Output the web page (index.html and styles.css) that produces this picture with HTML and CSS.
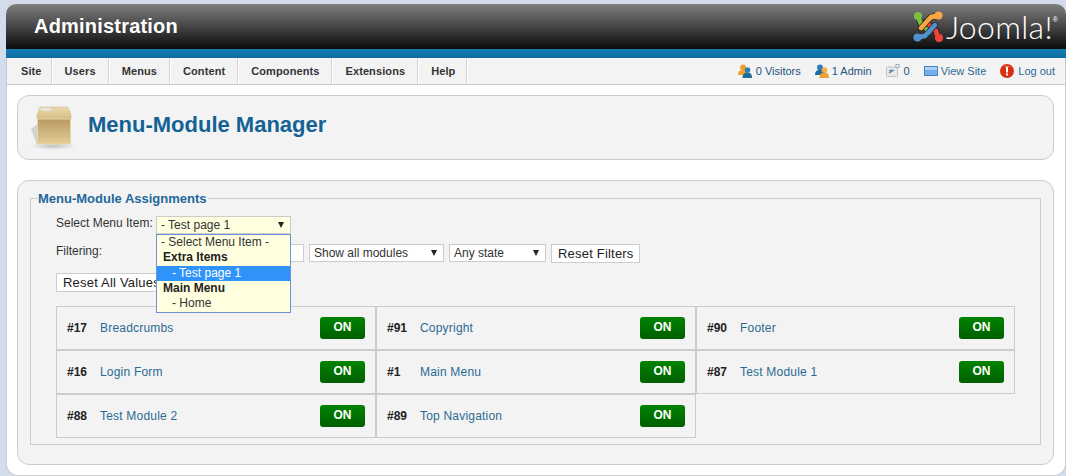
FILE: index.html
```html
<!DOCTYPE html>
<html lang="en">
<head>
<meta charset="utf-8">
<title>Menu-Module Manager</title>
<link rel="stylesheet" href="styles.css">
</head>
<body>
<div class="desk">
<div class="wrap">
  <header class="head">
    <div class="brand">Administration</div>
    <div class="logo">
      <svg class="logo-mark" width="32" height="32" viewBox="0 0 32 32" aria-hidden="true">
        <g fill="none" stroke-linecap="round" stroke-linejoin="round">
          <g stroke="#1a1a1a" stroke-width="6"><path d="M5 5 L8 13 L17 21"/></g>
          <g stroke="#7ac143" stroke-width="4.800"><path d="M5 5 L8 13 L17 21"/></g>
          <g stroke="#1a1a1a" stroke-width="6"><path d="M25 27 L23 20 L13 11"/></g>
          <g stroke="#ef4135" stroke-width="4.800"><path d="M25 27 L23 20 L13 11"/></g>
          <g stroke="#1a1a1a" stroke-width="6"><path d="M25 5 L18 6 L8 17"/></g>
          <g stroke="#f9a541" stroke-width="4.800"><path d="M25 5 L18 6 L8 17"/></g>
          <g stroke="#1a1a1a" stroke-width="6"><path d="M4 26 L12 25 L22 14"/></g>
          <g stroke="#5091cd" stroke-width="4.800"><path d="M4 26 L12 25 L22 14"/></g>
        </g>
        <circle cx="5" cy="5" r="4" fill="#7ac143"/>
        <circle cx="25.500" cy="4.500" r="4" fill="#f9a541"/>
        <circle cx="26" cy="27" r="4" fill="#ef4135"/>
        <circle cx="4.500" cy="26.500" r="4" fill="#5091cd"/>
      </svg>
      <span class="logo-text">Joomla!</span><span class="logo-reg">®</span>
    </div>
  </header>
  <div class="band"></div>
  <nav class="bar">
    <ul class="menu">
      <li class="menu-item">Site</li>
      <li class="menu-item">Users</li>
      <li class="menu-item">Menus</li>
      <li class="menu-item">Content</li>
      <li class="menu-item">Components</li>
      <li class="menu-item">Extensions</li>
      <li class="menu-item">Help</li>
    </ul>
    <div class="status">
      <span class="stat">
        <svg class="ico" viewBox="0 0 14 14" aria-hidden="true"><circle cx="5" cy="3.500" r="3" fill="#f0a030"/><path d="M0 11c0-4 2-5 5-5s5 1 5 5z" fill="#f0a030"/><circle cx="9.500" cy="6" r="2.800" fill="#2f7fb5"/><path d="M4.500 14c0-4 2-5.500 5-5.500s4.500 1.500 4.500 5.500z" fill="#1f6c9f"/></svg>
        0 Visitors
      </span>
      <span class="stat stat-tight">
        <svg class="ico" viewBox="0 0 14 14" aria-hidden="true"><circle cx="5" cy="3.500" r="3" fill="#2f7fb5"/><path d="M0 11c0-4 2-5 5-5s5 1 5 5z" fill="#1f6c9f"/><circle cx="9.500" cy="6" r="2.800" fill="#f5ad3c"/><path d="M4.500 14c0-4 2-5.500 5-5.500s4.500 1.500 4.500 5.500z" fill="#f0a030"/></svg>
        1 Admin
      </span>
      <span class="stat">
        <svg class="ico" viewBox="0 0 14 14" aria-hidden="true"><rect x="0.500" y="3" width="11" height="9.500" rx="1" fill="#e8e8e8" stroke="#c4c4c4"/><path d="M3 9l5-3M3 7l3-1" stroke="#4f7fa5" stroke-width="1.200"/><rect x="10" y="0.500" width="3" height="3" fill="#fff" stroke="#9ab"/></svg>
        <span>0</span>
      </span>
      <a class="stat stat-link stat-tight" href="#">
        <svg class="ico" viewBox="0 0 14 14" aria-hidden="true"><rect x="0.500" y="2.500" width="13" height="9" fill="#6fb0ea" stroke="#4a7fb8"/><rect x="1" y="3" width="12" height="3" fill="#a8d2f5"/></svg>
        View Site
      </a>
      <a class="stat stat-link" href="#">
        <svg class="ico" viewBox="0 0 14 14" aria-hidden="true"><circle cx="7" cy="7" r="7" fill="#d8300f"/><path d="M3 3a6 6 0 0 1 8 0z" fill="#ee7a50"/><rect x="6" y="3" width="2" height="5.500" fill="#fff"/><rect x="6" y="9.500" width="2" height="2" fill="#fff"/></svg>
        Log out
      </a>
    </div>
  </nav>
  <main class="content">
    <section class="panel title-panel">
      <svg class="box-icon" width="48" height="50" viewBox="0 0 48 50" aria-hidden="true">
        <defs>
          <linearGradient id="boxFront" x1="0" y1="0" x2="0" y2="1"><stop offset="0" stop-color="#b89a62"/><stop offset="1" stop-color="#e3cc95"/></linearGradient>
          <linearGradient id="boxTop" x1="0" y1="0" x2="0" y2="1"><stop offset="0" stop-color="#eadab0"/><stop offset="1" stop-color="#d6bc82"/></linearGradient>
          <radialGradient id="boxShadow"><stop offset="0" stop-color="#999" stop-opacity=".55"/><stop offset="1" stop-color="#999" stop-opacity="0"/></radialGradient>
        </defs>
        <ellipse cx="23" cy="41" rx="23" ry="4" fill="url(#boxShadow)"/>
        <path d="M7 19 L1 24 L7 40z" fill="#d2d2d2"/>
        <path d="M10 2 L38 2 L41 10 L41 14 L7 14 L7 10z" fill="url(#boxTop)" stroke="#cdb57f" stroke-width=".5"/>
        <rect x="7.500" y="14" width="33" height="25" fill="url(#boxFront)" stroke="#e6d6ac"/>
        <rect x="11" y="3.500" width="10" height="2" fill="#e4eef5"/>
      </svg>
      <h1 class="page-title">Menu-Module Manager</h1>
    </section>
    <section class="panel main-panel">
      <fieldset class="group">
        <legend class="group-title">Menu-Module Assignments</legend>
        <div class="row row-select">
          <span class="row-label">Select Menu Item:</span>
          <div class="picker">
            <div class="select select-open"><span>- Test page 1</span><i class="arrow"></i></div>
            <ul class="dropdown">
              <li class="opt opt-top">- Select Menu Item -</li>
              <li class="opt opt-top opt-group">Extra Items</li>
              <li class="opt opt-sub opt-active">- Test page 1</li>
              <li class="opt opt-group">Main Menu</li>
              <li class="opt opt-sub">- Home</li>
            </ul>
          </div>
        </div>
        <div class="row row-filter">
          <span class="row-label">Filtering:</span>
          <div class="filters">
            <div class="search"></div>
            <div class="select select-modules"><span>Show all modules</span><i class="arrow"></i></div>
            <div class="select select-state"><span>Any state</span><i class="arrow"></i></div>
            <button class="btn btn-filters" type="button">Reset Filters</button>
          </div>
        </div>
        <div class="row row-reset">
          <button class="btn btn-reset" type="button">Reset All Values</button>
        </div>
        <div class="grid">
          <div class="cell"><b class="cell-id">#17</b><a class="cell-name" href="#">Breadcrumbs</a><span class="on">ON</span></div>
          <div class="cell"><b class="cell-id">#91</b><a class="cell-name" href="#">Copyright</a><span class="on">ON</span></div>
          <div class="cell"><b class="cell-id">#90</b><a class="cell-name" href="#">Footer</a><span class="on">ON</span></div>
          <div class="cell"><b class="cell-id">#16</b><a class="cell-name" href="#">Login Form</a><span class="on">ON</span></div>
          <div class="cell"><b class="cell-id">#1</b><a class="cell-name" href="#">Main Menu</a><span class="on">ON</span></div>
          <div class="cell"><b class="cell-id">#87</b><a class="cell-name" href="#">Test Module 1</a><span class="on">ON</span></div>
          <div class="cell"><b class="cell-id">#88</b><a class="cell-name" href="#">Test Module 2</a><span class="on">ON</span></div>
          <div class="cell"><b class="cell-id">#89</b><a class="cell-name" href="#">Top Navigation</a><span class="on">ON</span></div>
        </div>
      </fieldset>
    </section>
  </main>
</div>
</div>
</body>
</html>
```
FILE: styles.css
```css
* { box-sizing: border-box; }
html { background: #fff; height: 476px; overflow: hidden; }
body {
  margin: 0;
  width: 1072px;
  height: 476px;
  background: #fff;
  font-family: "Liberation Sans", Arial, sans-serif;
  font-size: 12px;
  color: #333;
}
a { text-decoration: none; }
ul { list-style: none; margin: 0; padding: 0; }

.desk {
  width: 1066px;
  height: 476px;
  padding: 4px 0 0 6px;
  background: #d3dcea;
}

.wrap {
  width: 1060px;
  height: 472px;
  background: #fff;
  border: 1px solid #ccc;
  border-top: 0;
  border-radius: 10px 10px 12px 12px;
}

.head {
  height: 45px;
  margin: 0 -1px;
  display: flex;
  justify-content: space-between;
  background: linear-gradient(#7f7f7f, #0b0b0b);
  border-radius: 10px 10px 0 0;
}
.brand {
  margin: 10px 0 0 28px;
  font-size: 20px;
  line-height: 24px;
  font-weight: 700;
  letter-spacing: .2px;
  color: #fff;
}
.logo {
  display: flex;
  align-items: flex-start;
  margin-right: 8px;
  color: #fff;
}
.logo-mark { margin: 7px 1px 0 0; }
.logo-text {
  font-family: Lato, "Liberation Sans", sans-serif;
  font-weight: 300;
  font-size: 32px;
  line-height: 36px;
  margin-top: 5px;
  letter-spacing: .3px;
}
.logo-reg { font-size: 7px; line-height: 8px; margin-top: 12px; }

.band {
  height: 9px;
  margin: 0 -1px;
  background: linear-gradient(#1280b8, #0e6c9e);
}

.bar {
  height: 27px;
  display: flex;
  justify-content: space-between;
  background: #f3f3f3;
  border-bottom: 1px solid #ccc;
}
.menu { display: flex; }
.menu-item {
  padding: 0 12px 0 13px;
  line-height: 26px;
  font-size: 11px;
  font-weight: 700;
  letter-spacing: .1px;
  color: #333;
  border-right: 1px solid #d4d4d4;
  box-shadow: 1px 0 0 #fff;
}
.menu-item:first-child { padding-left: 14px; padding-right: 9px; }
.menu-item:last-child { padding-right: 11px; }

.status {
  display: flex;
  align-items: center;
  gap: 14px;
  padding-right: 10px;
  font-size: 11px;
  color: #24557c;
}
.stat { display: flex; align-items: center; gap: 4px; }
.stat-tight { gap: 3px; }
.stat-link { color: #2c6a94; }
.ico { width: 14px; height: 14px; flex: none; }

.content { padding: 10px 11px 0 10px; }
.panel {
  background: #f3f3f3;
  border: 1px solid #ccc;
  border-radius: 12px;
}
.title-panel {
  height: 65px;
  display: flex;
  align-items: center;
  gap: 10px;
  padding-left: 13px;
  margin-bottom: 20px;
}
.box-icon { margin-top: 4px; flex: none; margin-left: -1px; }
.page-title {
  margin: 0 0 6px;
  font-size: 22px;
  line-height: 26px;
  font-weight: 700;
  color: #146295;
}
.main-panel {
  height: 285px;
  padding: 10px 12px 0;
}

.group {
  margin: 0;
  padding: 0 25px;
  height: 254px;
  border: 1px solid #ccc;
  min-width: 0;
}
.group-title {
  margin-left: -18px;
  padding: 0 1px 0 0;
  font-size: 13px;
  line-height: 15px;
  font-weight: 700;
  color: #24679b;
}

.row { display: flex; color: #333; }
.row-select { margin-top: 10px; height: 28px; }
.row-filter { height: 29px; }
.row-reset { height: 33px; }
.row-label { width: 100px; line-height: 14px; }

.picker { position: relative; width: 135px; }
.select {
  height: 18px;
  display: flex;
  align-items: center;
  justify-content: space-between;
  padding: 0 6px 0 4px;
  background: #fff;
  border: 1px solid #ccc;
  font-size: 12px;
  line-height: 14px;
  color: #333;
}
.select-open { background: #ffffe0; }
.select-modules { width: 135px; }
.select-state { width: 97px; }
.arrow {
  width: 0;
  height: 0;
  border-left: 3.5px solid transparent;
  border-right: 3.5px solid transparent;
  border-top: 6px solid #222;
}

.dropdown {
  position: absolute;
  top: 18px;
  left: 0;
  z-index: 2;
  width: 135px;
  height: 79px;
  padding: 1px 0;
  background: #ffffe0;
  border: 1px solid #6b93d6;
}
.opt { height: 15px; line-height: 14px; padding-left: 4px; color: #333; }
.opt-top { line-height: 13px; }
.opt-group { padding-left: 6px; font-weight: 700; color: #222; }
.opt-sub { padding-left: 15px; }
.opt-active { background: #3093fb; color: #fff; }

.filters { display: flex; gap: 5px; align-items: flex-start; }
.search { width: 148px; height: 18px; background: #fff; border: 1px solid #ccc; }

.btn {
  height: 19px;
  margin: 0;
  padding: 0 6px;
  background: #fff;
  border: 1px solid #ccc;
  font-family: inherit;
  font-size: 13px;
  line-height: 15px;
  color: #222;
  letter-spacing: .2px;
  white-space: nowrap;
}
.btn-filters { width: 89px; }
.btn-reset { width: 112px; text-align: left; }

.grid {
  display: grid;
  grid-template-columns: 320px 320px 319px;
  grid-auto-rows: 44px;
}
.cell {
  display: flex;
  align-items: center;
  padding: 0 10px;
  border: 1px solid #ccc;
  font-size: 12px;
}
.cell-id { width: 33px; color: #222; }
.cell-name { color: #2c6a94; letter-spacing: .2px; }
.on {
  margin-left: auto;
  width: 45px;
  height: 22px;
  border-radius: 3px;
  background: linear-gradient(#008400, #005f00);
  color: #fff;
  font-weight: 700;
  text-align: center;
  line-height: 21px;
}
```
